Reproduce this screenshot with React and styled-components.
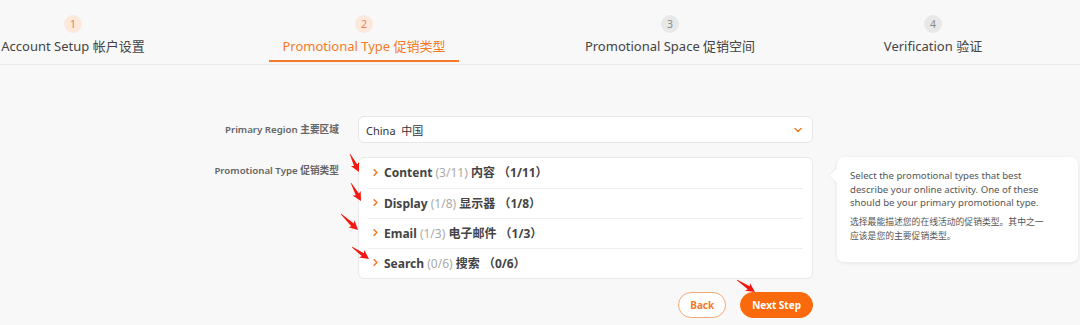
import React from 'react'
import styled, { createGlobalStyle } from 'styled-components'
import { ChevronDown, ChevronRight } from 'lucide-react'

const GlobalStyle = createGlobalStyle`
  html, body {
    margin: 0;
    padding: 0;
    background: #f8f8f8;
    font-family: "Noto Sans", "Noto Sans CJK SC", sans-serif;
    color: #444;
  }
`;

const Page = styled.div`
  position: relative;
  width: 1080px;
  height: 325px;
  overflow: hidden;
  background: #f8f8f8;
`;

const Steps = styled.div`
  display: flex;
  height: 64px;
  border-bottom: 1px solid #e9e9e9;
  overflow: hidden;
`;

const Step = styled.div`
  flex: none;
  width: ${p => p.$w}px;
  display: flex;
  flex-direction: column;
  align-items: center;
  padding-top: 15px;
  box-sizing: border-box;
`;

const Circle = styled.div`
  width: 18px;
  height: 18px;
  border-radius: 50%;
  display: flex;
  align-items: center;
  justify-content: center;
  font-size: 10.5px;
  background: ${p => (p.$done ? '#fde8dc' : '#e8e8e8')};
  color: ${p => (p.$done ? '#e8804a' : '#888')};
`;

const StepLabel = styled.div`
  margin-top: 5px;
  font-size: 13px;
  line-height: 16px;
  white-space: nowrap;
  padding: 0 13px 6px;
  color: ${p => (p.$active ? '#f47a2a' : '#444')};
  border-bottom: 2px solid ${p => (p.$active ? '#f47a2a' : 'transparent')};
`;

const Main = styled.div`
  display: grid;
  grid-template-columns: 200px 455px 246px;
  column-gap: 19px;
  row-gap: 14px;
  padding: 51px 0 0 139px;
  align-items: start;
`;

const Label = styled.div`
  text-align: right;
  font-size: 9.7px;
  font-weight: 600;
  color: #666;
  line-height: ${p => p.$lh}px;
  white-space: nowrap;
`;

const Select = styled.div`
  height: 27px;
  box-sizing: border-box;
  background: #fff;
  border: 1px solid #e6e6e6;
  border-radius: 6px;
  display: flex;
  align-items: center;
  justify-content: space-between;
  padding: 0 8px 0 7px;
  font-size: 11px;
  color: #333;
`;

const Accordion = styled.div`
  background: #fff;
  border: 1px solid #e9e9e9;
  border-radius: 6px;
  padding: 0 9px;
`;

const Row = styled.div`
  height: 30px;
  display: flex;
  align-items: center;
  gap: 3px;
  padding: 0 0 2px 2px;
  font-size: 12px;
  font-weight: 700;
  color: #444;
  white-space: pre;
  border-top: ${p => (p.$first ? 'none' : '1px solid #eeeeee')};
  box-sizing: border-box;
`;

const Muted = styled.span`
  color: #aaa;
  font-weight: 400;
`;

const Tooltip = styled.div`
  position: relative;
  margin-left: 5px;
  background: #fff;
  border-radius: 7px;
  box-shadow: 0 1px 4px rgba(0, 0, 0, 0.08);
  padding: 12px 30px 10px 13px;
  color: #555;
  box-sizing: border-box;
  height: 105px;

  &::before {
    content: '';
    position: absolute;
    left: -5px;
    top: 13px;
    width: 11px;
    height: 11px;
    background: #fff;
    transform: rotate(45deg);
    box-shadow: -1px 1px 2px rgba(0, 0, 0, 0.04);
  }
`;

const TipText = styled.p`
  position: relative;
  margin: 0 0 5px;
  font-size: ${p => p.$size}px;
  line-height: ${p => p.$lh}px;
`;

const Actions = styled.div`
  grid-column: 2;
  display: flex;
  justify-content: flex-end;
  gap: 14px;
  margin-top: -1px;
  padding-right: 0;
`;

const Button = styled.button`
  height: 26px;
  padding: 0 11px;
  border-radius: 13px;
  font-family: inherit;
  font-size: 10px;
  font-weight: 700;
  cursor: pointer;
  border: 1px solid ${p => (p.$primary ? '#fa6a0c' : '#f6a875')};
  background: ${p => (p.$primary ? '#fa6a0c' : '#fff')};
  color: ${p => (p.$primary ? '#fff' : '#f47a2a')};
`;

const Overlay = styled.svg`
  position: absolute;
  left: 0;
  top: 0;
  pointer-events: none;
`;

const steps = [
  { n: 1, text: 'Account Setup 帐户设置', w: 146, done: true },
  { n: 2, text: 'Promotional Type 促销类型', w: 436, done: true, active: true },
  { n: 3, text: 'Promotional Space 促销空间', w: 176 },
  { n: 4, text: 'Verification 验证', w: 350 },
];

const types = [
  { en: 'Content', a: '(3/11)', zh: '内容', b: '（1/11）' },
  { en: 'Display', a: '(1/8)', zh: '显示器', b: '（1/8）' },
  { en: 'Email', a: '(1/3)', zh: '电子邮件', b: '（1/3）' },
  { en: 'Search', a: '(0/6)', zh: '搜索', b: '（0/6）' },
];

// red annotation arrows: tail x, tail y, tip x, tip y
const arrows = [
  [350, 154, 359, 172],
  [351, 183, 361, 201],
  [341, 214, 358, 230],
  [352, 247, 369, 259],
  [737, 280, 755, 292],
];

function arrowPoints([x1, y1, x2, y2]) {
  const dx = x2 - x1;
  const dy = y2 - y1;
  const len = Math.hypot(dx, dy);
  const ux = dx / len;
  const uy = dy / len;
  const nx = -uy;
  const ny = ux;
  const head = 9;
  const bx = x2 - ux * head;
  const by = y2 - uy * head;
  const pts = [
    [x1 + nx * 0.3, y1 + ny * 0.3],
    [bx + ux * 1.5 + nx * 1.8, by + uy * 1.5 + ny * 1.8],
    [bx + nx * 4.6, by + ny * 4.6],
    [x2, y2],
    [bx - nx * 4.6, by - ny * 4.6],
    [bx + ux * 1.5 - nx * 1.8, by + uy * 1.5 - ny * 1.8],
    [x1 - nx * 0.3, y1 - ny * 0.3],
  ];
  return pts.map(p => p.map(v => v.toFixed(1)).join(',')).join(' ');
}

const App = () => {
  return (
    <Page>
      <GlobalStyle />
      <Steps>
        {steps.map(s => (
          <Step key={s.n} $w={s.w}>
            <Circle $done={s.done}>{s.n}</Circle>
            <StepLabel $active={s.active}>{s.text}</StepLabel>
          </Step>
        ))}
      </Steps>
      <Main>
        <Label $lh={27}>Primary Region 主要区域</Label>
        <Select>
          <span>China&nbsp; 中国</span>
          <ChevronDown size={12} color="#f47a2a" strokeWidth={3} />
        </Select>
        <div />
        <Label $lh={28}>Promotional Type 促销类型</Label>
        <Accordion>
          {types.map((t, i) => (
            <Row key={t.en} $first={i === 0}>
              <ChevronRight size={11} color="#f47a2a" strokeWidth={3.5} />
              <span>
                {t.en} <Muted>{t.a}</Muted> {t.zh} {t.b}
              </span>
            </Row>
          ))}
        </Accordion>
        <Tooltip>
          <TipText $size={9.6} $lh={13.5}>
            Select the promotional types that best describe your online activity. One of these
            should be your primary promotional type.
          </TipText>
          <TipText $size={8.8} $lh={14}>
            选择最能描述您的在线活动的促销类型。其中之一应该是您的主要促销类型。
          </TipText>
        </Tooltip>
        <Actions>
          <Button>Back</Button>
          <Button $primary>Next Step</Button>
        </Actions>
      </Main>
      <Overlay width="1080" height="325" viewBox="0 0 1080 325">
        {arrows.map((a, i) => (
          <polygon key={i} points={arrowPoints(a)} fill="#f2170f" />
        ))}
      </Overlay>
    </Page>
  )
}

export default App
